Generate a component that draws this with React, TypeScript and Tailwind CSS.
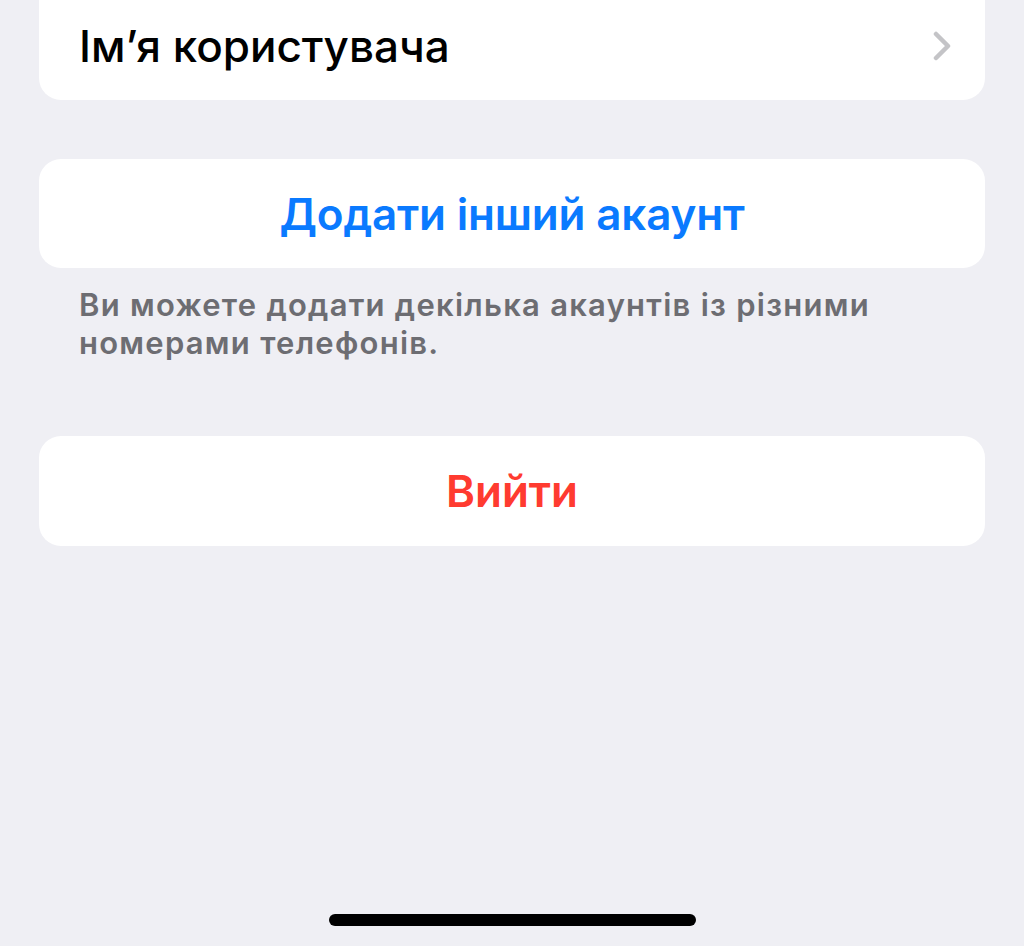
import React from "react";

export default function App() {
  return (
    <div
      className="w-[1024px] h-[946px] bg-[#efeff4] overflow-hidden flex flex-col"
      style={{ fontFamily: "Inter, 'Noto Sans', sans-serif" }}
    >
      <div className="mx-[39px] mt-[-9px] h-[109px] bg-white rounded-b-[22px] flex items-center justify-between pl-[40px] pr-[34px]">
        <span className="text-[44px] font-medium text-black tracking-[0px]">Ім’я користувача</span>
        <svg width="18" height="30" viewBox="0 0 18 30" fill="none">
          <path d="M3 3 L15 15 L3 27" stroke="#c4c4c7" strokeWidth="4.5" strokeLinecap="round" strokeLinejoin="round" />
        </svg>
      </div>

      <div className="mx-[39px] mt-[59px] h-[109px] bg-white rounded-[22px] flex items-center justify-center">
        <span className="text-[44px] font-semibold text-[#0a7aff] tracking-[-0.2px]">Додати інший акаунт</span>
      </div>

      <div className="ml-[79px] w-[860px] mt-[18px] text-[31px] leading-[38px] font-semibold text-[#6d6d72] tracking-[1.25px]">
        Ви можете додати декілька акаунтів із різними номерами телефонів.
      </div>

      <div className="mx-[39px] mt-[74px] h-[110px] bg-white rounded-[22px] flex items-center justify-center">
        <span className="text-[44px] font-semibold text-[#ff3b30] tracking-[0px]">Вийти</span>
      </div>

      <div className="flex-1" />
      <div className="flex justify-center pb-[20px]">
        <div className="w-[367px] h-[12px] rounded-full bg-black" />
      </div>
    </div>
  );
}
